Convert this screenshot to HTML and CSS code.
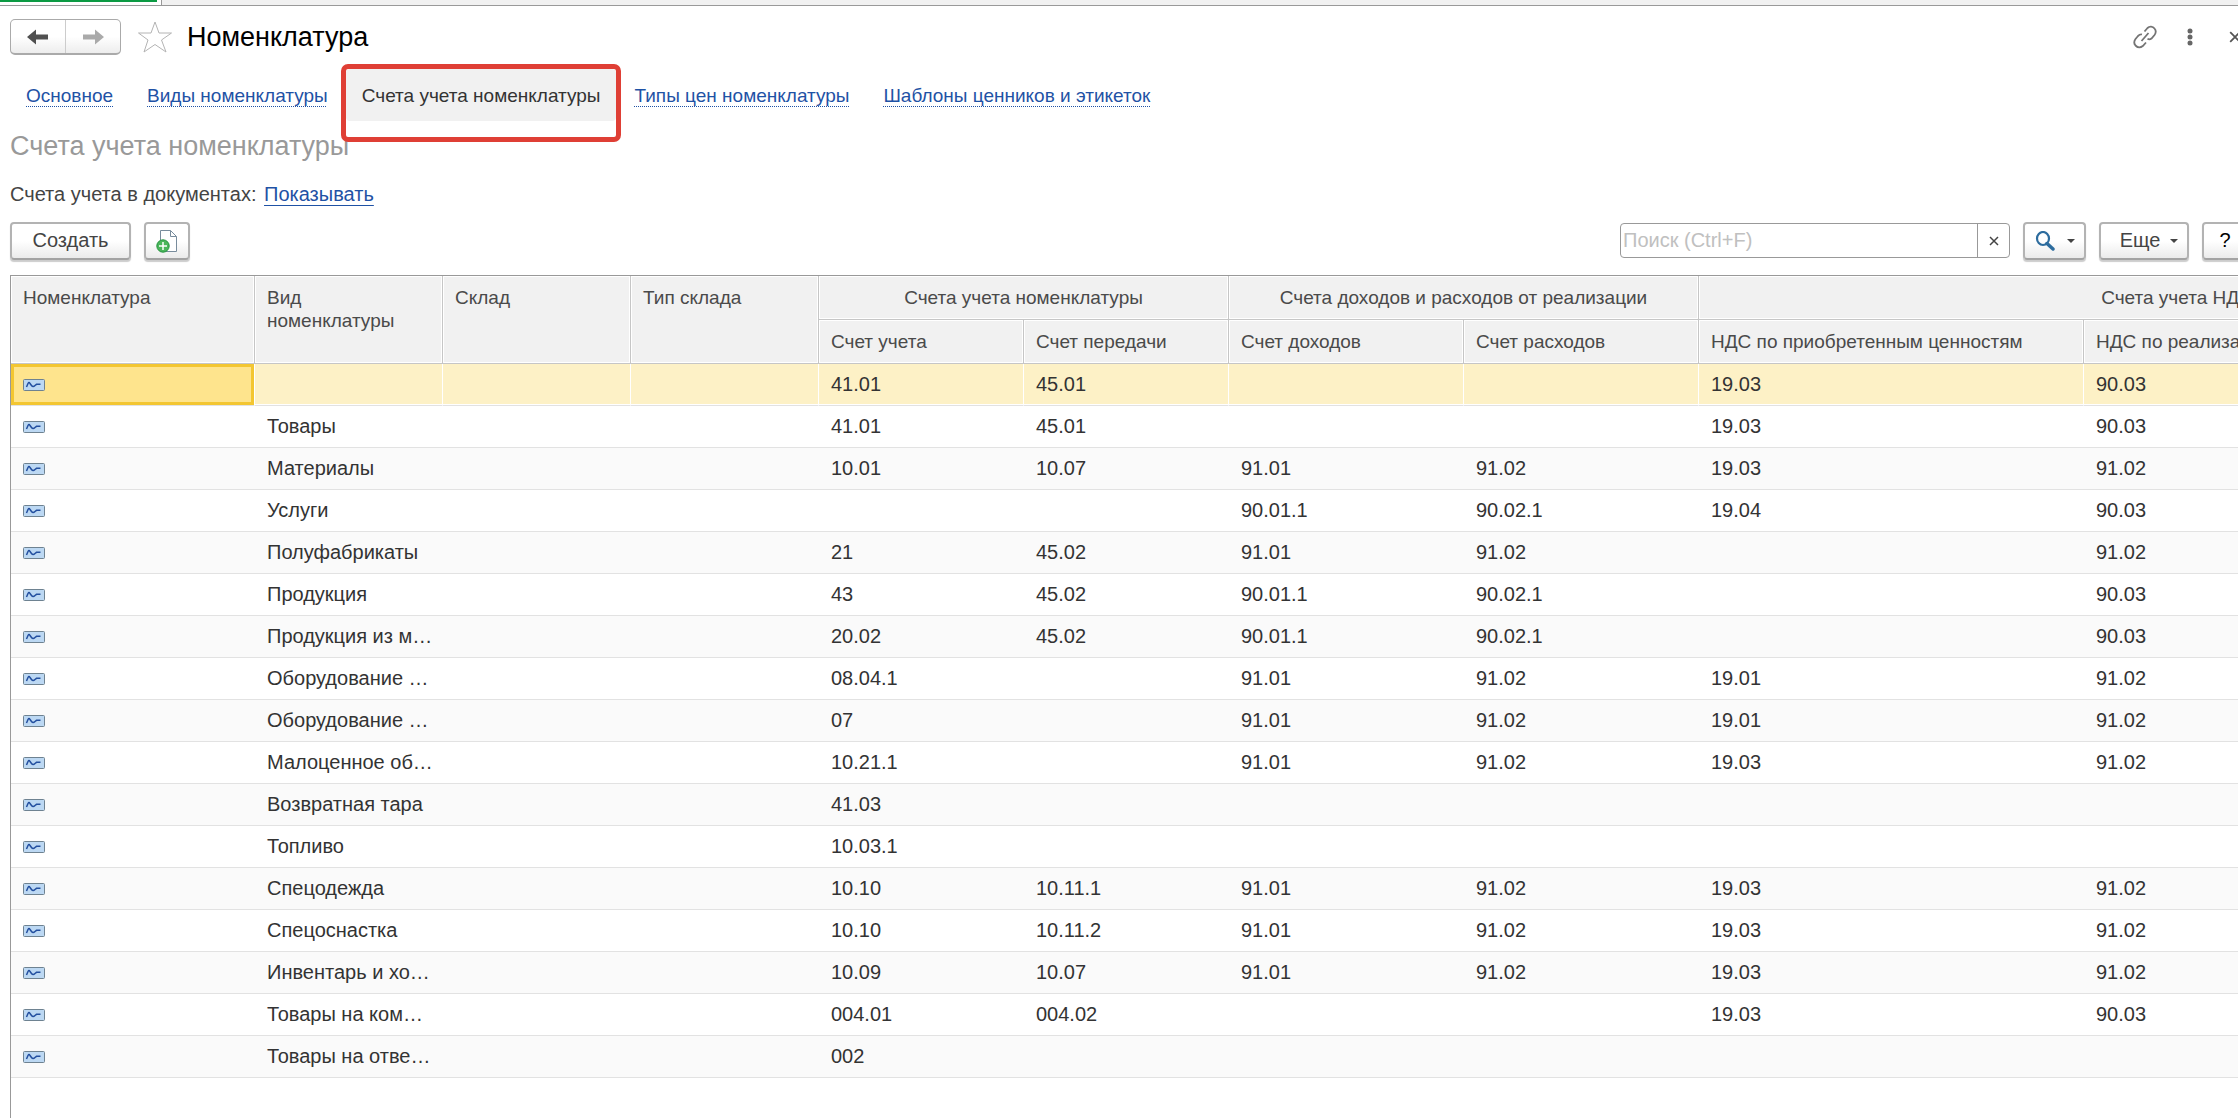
FILE: index.html
```html
<!DOCTYPE html>
<html lang="ru">
<head>
  <meta charset="UTF-8">
  <title>Номенклатура</title>
  <link rel="stylesheet" href="styles.css">
</head>
<body>

  <svg class="sprite" aria-hidden="true">
    <symbol id="record" viewBox="0 0 22 12">
      <rect x="0.5" y="0.5" width="21" height="11" rx="1" fill="#bcd8f3" stroke="#6e8291"/>
      <path d="M3.500 8 5 4.500Q6 2.500 7 4.500L8.500 6.500Q10 8.500 12 6.500L13.500 5.300H17.500" fill="none" stroke="#2450a0" stroke-width="1.500"/>
    </symbol>
    <symbol id="cross" viewBox="0 0 10 10">
      <path d="M1 1 9 9M9 1 1 9" fill="none" stroke="currentColor" stroke-width="1.500"/>
    </symbol>
    <symbol id="caret" viewBox="0 0 8 4">
      <path d="M0 0H8L4 4Z" fill="#444"/>
    </symbol>
  </svg>

  <div class="window-tabs"><div class="window-tab"></div></div>

  <div class="page">
    <header class="title-bar">
      <div class="history">
        <button aria-label="Назад"><svg width="22" height="16" viewBox="0 0 22 16"><path d="M0 8 9 0.500V5.500H21V10.500H9V15.500Z" fill="#505050"/></svg></button>
        <button aria-label="Вперед"><svg width="22" height="16" viewBox="0 0 22 16"><path d="M22 8 13 0.500V5.500H1V10.500H13V15.500Z" fill="#aaa"/></svg></button>
      </div>
      <button class="plain" aria-label="В избранное"><svg width="36" height="34" viewBox="0 0 36 34"><path d="M18 2 22 13H34.500L24.500 20 29 32 18 24.500 7 32 11 20 1.500 13H14Z" fill="#fff" stroke="#b4b4b4"/></svg></button>
      <h1>Номенклатура</h1>
      <div class="window-tools">
        <button class="plain" aria-label="Получить ссылку"><svg width="24" height="24" viewBox="0 0 24 24"><path d="M11.500 6.500 14.500 3A4.600 4.600 0 0 1 21.500 3.500Q24 6.500 21.500 10L18.500 13.500Q16.500 15 14.500 13.800M9 9.500Q7 9 5 11L2.500 14Q0 17.500 2.500 20.500 6 24 9.800 21L13 17.500M8.500 16 15.500 8" fill="none" stroke="#747474" stroke-width="1.800"/></svg></button>
        <button class="plain" aria-label="Меню"><svg width="6" height="18" viewBox="0 0 6 18"><g fill="#666"><circle cx="3" cy="3" r="2.500"/><circle cx="3" cy="9" r="2.500"/><circle cx="3" cy="15" r="2.500"/></g></svg></button>
        <button class="plain" aria-label="Закрыть"><svg width="12" height="12"><use href="#cross"/></svg></button>
      </div>
    </header>

    <nav class="sections">
      <a href="#">Основное</a>
      <a href="#">Виды номенклатуры</a>
      <a href="#" class="active">Счета учета номенклатуры</a>
      <a href="#">Типы цен номенклатуры</a>
      <a href="#">Шаблоны ценников и этикеток</a>
    </nav>

    <h2>Счета учета номенклатуры</h2>
    <p class="setting">Счета учета в документах: <a href="#">Показывать</a></p>

    <div class="toolbar">
      <button class="btn create">Создать</button>
      <button class="btn icon" aria-label="Создать группу"><svg width="22" height="24" viewBox="0 0 22 24"><path d="M4.500 1.500H14.500L20.500 7.500V22.500H4.500Z" fill="#fff" stroke="#788c9c"/><path d="M14.500 1.500V7.500H20.500" fill="none" stroke="#788c9c"/><circle cx="7" cy="17" r="6.200" fill="#4bb65b" stroke="#279540"/><path d="M7 13V21M3 17H11" stroke="#fff" stroke-width="1.500"/></svg></button>
      <div class="search">
        <input type="text" placeholder="Поиск (Ctrl+F)" aria-label="Поиск">
        <button aria-label="Очистить"><svg width="10" height="10"><use href="#cross"/></svg></button>
      </div>
      <button class="btn find" aria-label="Найти"><svg width="20" height="20" viewBox="0 0 20 20"><ellipse cx="8" cy="7.500" rx="6" ry="6.500" fill="none" stroke="#2d6c9e" stroke-width="2.200"/><path d="M12 12.500 18 18" stroke="#2d6c9e" stroke-width="3.500" stroke-linecap="round"/></svg><svg width="8" height="4"><use href="#caret"/></svg></button>
      <button class="btn more">Еще <svg width="8" height="4"><use href="#caret"/></svg></button>
      <button class="btn icon help">?</button>
    </div>

    <div class="list">
      <table>
        <colgroup>
          <col class="c-item"><col class="c-kind"><col class="c-kind"><col class="c-kind">
          <col class="c-acc"><col class="c-acc"><col class="c-income"><col class="c-income">
          <col class="c-vat"><col class="c-vat-sale">
        </colgroup>
        <thead>
          <tr>
            <th rowspan="2">Номенклатура</th>
            <th rowspan="2">Вид номенклатуры</th>
            <th rowspan="2">Склад</th>
            <th rowspan="2">Тип склада</th>
            <th colspan="2" class="group">Счета учета номенклатуры</th>
            <th colspan="2" class="group">Счета доходов и расходов от реализации</th>
            <th colspan="2" class="group">Счета учета НДС</th>
          </tr>
          <tr>
            <th>Счет учета</th>
            <th>Счет передачи</th>
            <th>Счет доходов</th>
            <th>Счет расходов</th>
            <th>НДС по приобретенным ценностям</th>
            <th>НДС по реализации</th>
          </tr>
        </thead>
        <tbody>
          <tr class="selected"><td><svg><use href="#record"/></svg></td><td></td><td></td><td></td><td>41.01</td><td>45.01</td><td></td><td></td><td>19.03</td><td>90.03</td></tr>
          <tr><td><svg><use href="#record"/></svg></td><td>Товары</td><td></td><td></td><td>41.01</td><td>45.01</td><td></td><td></td><td>19.03</td><td>90.03</td></tr>
          <tr><td><svg><use href="#record"/></svg></td><td>Материалы</td><td></td><td></td><td>10.01</td><td>10.07</td><td>91.01</td><td>91.02</td><td>19.03</td><td>91.02</td></tr>
          <tr><td><svg><use href="#record"/></svg></td><td>Услуги</td><td></td><td></td><td></td><td></td><td>90.01.1</td><td>90.02.1</td><td>19.04</td><td>90.03</td></tr>
          <tr><td><svg><use href="#record"/></svg></td><td>Полуфабрикаты</td><td></td><td></td><td>21</td><td>45.02</td><td>91.01</td><td>91.02</td><td></td><td>91.02</td></tr>
          <tr><td><svg><use href="#record"/></svg></td><td>Продукция</td><td></td><td></td><td>43</td><td>45.02</td><td>90.01.1</td><td>90.02.1</td><td></td><td>90.03</td></tr>
          <tr><td><svg><use href="#record"/></svg></td><td>Продукция из м…</td><td></td><td></td><td>20.02</td><td>45.02</td><td>90.01.1</td><td>90.02.1</td><td></td><td>90.03</td></tr>
          <tr><td><svg><use href="#record"/></svg></td><td>Оборудование …</td><td></td><td></td><td>08.04.1</td><td></td><td>91.01</td><td>91.02</td><td>19.01</td><td>91.02</td></tr>
          <tr><td><svg><use href="#record"/></svg></td><td>Оборудование …</td><td></td><td></td><td>07</td><td></td><td>91.01</td><td>91.02</td><td>19.01</td><td>91.02</td></tr>
          <tr><td><svg><use href="#record"/></svg></td><td>Малоценное об…</td><td></td><td></td><td>10.21.1</td><td></td><td>91.01</td><td>91.02</td><td>19.03</td><td>91.02</td></tr>
          <tr><td><svg><use href="#record"/></svg></td><td>Возвратная тара</td><td></td><td></td><td>41.03</td><td></td><td></td><td></td><td></td><td></td></tr>
          <tr><td><svg><use href="#record"/></svg></td><td>Топливо</td><td></td><td></td><td>10.03.1</td><td></td><td></td><td></td><td></td><td></td></tr>
          <tr><td><svg><use href="#record"/></svg></td><td>Спецодежда</td><td></td><td></td><td>10.10</td><td>10.11.1</td><td>91.01</td><td>91.02</td><td>19.03</td><td>91.02</td></tr>
          <tr><td><svg><use href="#record"/></svg></td><td>Спецоснастка</td><td></td><td></td><td>10.10</td><td>10.11.2</td><td>91.01</td><td>91.02</td><td>19.03</td><td>91.02</td></tr>
          <tr><td><svg><use href="#record"/></svg></td><td>Инвентарь и хо…</td><td></td><td></td><td>10.09</td><td>10.07</td><td>91.01</td><td>91.02</td><td>19.03</td><td>91.02</td></tr>
          <tr><td><svg><use href="#record"/></svg></td><td>Товары на ком…</td><td></td><td></td><td>004.01</td><td>004.02</td><td></td><td></td><td>19.03</td><td>90.03</td></tr>
          <tr><td><svg><use href="#record"/></svg></td><td>Товары на отве…</td><td></td><td></td><td>002</td><td></td><td></td><td></td><td></td><td></td></tr>
        </tbody>
      </table>
    </div>
  </div>

</body>
</html>
```

FILE: styles.css
```css
* { box-sizing: border-box; }
body { margin: 0; height: 100vh; display: flex; flex-direction: column; overflow: hidden; background: #fff; color: #333; font: 20px/23px "Liberation Sans", Arial, sans-serif; }
h1, h2, p { margin: 0; font-weight: normal; }
h1, h2 { font-size: 27px; line-height: 32px; }
h1 { color: #000; }
h2 { color: #999; margin-top: 9px; }
a { color: #1f52a5; text-decoration: none; }
button, input { font: inherit; color: #444; }
button { display: flex; align-items: center; justify-content: center; padding: 0; }
.sprite { position: absolute; width: 0; height: 0; }
.plain { border: 0; background: none; }

.window-tabs { height: 6px; flex: none; background: #f1f1f1; border-bottom: 1px solid #999; }
.window-tab { width: 162px; height: 5px; background: #fff linear-gradient(#0b9a43, #0b9a43) no-repeat; background-size: 157px 2px; border-right: 1px solid #999; }

/* the form is a bit wider than the window, its right edge is cut off */
.page { flex: 1; display: flex; flex-direction: column; min-height: 0; margin-right: -10px; padding-left: 10px; }

.title-bar { display: flex; align-items: center; height: 63px; padding: 11px 0 12px; }
.title-bar h1 { margin-left: 14px; }
.history { display: flex; width: 111px; height: 36px; margin-right: 16px; border: 1px solid #aaa; border-bottom-width: 2px; border-radius: 5px; background: linear-gradient(#fff 50%, #ededed); }
.history button { flex: 1; border: 0; background: none; }
.history button + button { border-left: 1px solid #ccc; }
.window-tools { display: flex; align-items: center; margin-left: auto; padding-right: 7px; gap: 30px; }
.window-tools button:last-child { margin-left: 6px; color: #555; }

.sections { display: flex; gap: 2px; font-size: 19px; }
.sections a { position: relative; display: flex; padding: 15px 16px 14px; height: 52px; }
.sections a:not(.active) { text-decoration: underline dotted 1px; text-underline-offset: 4px; }
.sections .active { color: #333; background: #f1f1f1; border-radius: 4px; }
.sections .active::after { content: ""; position: absolute; inset: -5px -5px -21px; border: 5px solid #df3f35; border-radius: 7px; }

.setting { margin-top: 21px; color: #444; }
.setting a { margin-left: 2px; text-decoration: underline 1px; text-underline-offset: 4px; }

.toolbar { display: flex; align-items: center; margin-top: 15px; height: 39px; }
.btn { height: 38px; border: 2px solid #b3b3b3; border-bottom-color: #a3a3a3; border-radius: 4px; background: linear-gradient(#fff 50%, #ebebeb); box-shadow: 0 2px 1px #ccc; }
.create { width: 121px; }
.icon { width: 46px; margin-left: 13px; }
.help { color: #000; }
.search { display: flex; width: 390px; height: 35px; margin-left: auto; border: 1px solid #999; border-radius: 4px; }
.search input { flex: 1; min-width: 0; padding: 0 2px; border: 0; background: none; outline: 0; }
.search input::placeholder { color: #c0c0c0; }
.search button { width: 32px; border: 0; border-left: 1px solid #999; background: none; }
.find { width: 63px; margin-left: 13px; gap: 12px; }
.more { width: 90px; margin-left: 13px; padding-left: 10px; gap: 10px; }

.list { flex: 1; min-height: 0; margin-top: 15px; border: 1px solid #999; border-width: 1px 0 0 1px; overflow: hidden; }
table { width: 2645px; table-layout: fixed; border-collapse: separate; border-spacing: 0; }
th, td { padding: 0 12px; text-align: left; white-space: nowrap; overflow: hidden; }
th { height: 44px; padding-top: 10px; vertical-align: top; white-space: normal; font-size: 19px; font-weight: normal; color: #4a4a4a; background: #f1f1f1; border-right: 1px solid #c6c6c6; border-bottom: 1px solid #c6c6c6; box-shadow: inset 0 0 0 1px #fff; }
.group { text-align: center; }
td { height: 42px; border-bottom: 1px solid #e2e2e2; }
td svg { display: block; width: 22px; height: 12px; }
tbody tr:nth-child(odd) { background: #fafafa; }
tbody .selected td { background: #fdf1c6; border-right: 1px solid #fff; box-shadow: inset 0 -1px #fff; }
tbody .selected td:first-child { background: #fee48d; box-shadow: inset 0 0 0 3px #f3c631; }
.c-item { width: 244px; }
.c-kind { width: 188px; }
.c-acc { width: 205px; }
.c-income { width: 235px; }
.c-vat { width: 385px; }
.c-vat-sale { width: 572px; }
```
